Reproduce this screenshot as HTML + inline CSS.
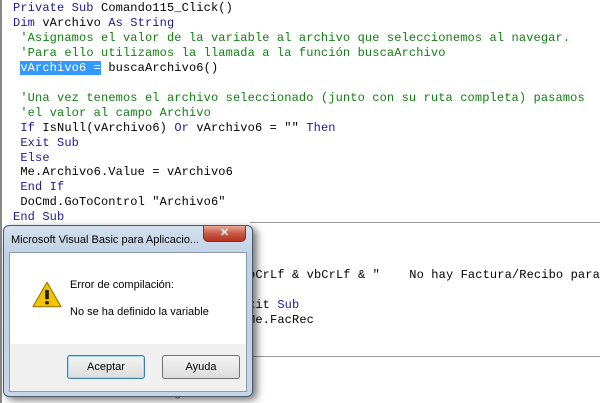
<!DOCTYPE html>
<html><head><style>
body{margin:0;width:600px;height:403px;overflow:hidden;background:#fff;position:relative;font-family:"Liberation Mono",monospace;}
.c{position:absolute;font-size:12px;white-space:pre;line-height:14.95px;color:#000;letter-spacing:0.13px}
.k{color:#1a1a9a}.g{color:#108010}
.hl{background:#3399ff;color:#fff}
.dlg{position:absolute;left:3px;top:225px;width:248px;height:170px;border:1px solid #4b5a6c;border-radius:6px;background:linear-gradient(#d3e0ee,#bfd1e4 30px,#c6d6e8);box-shadow:4px 3px 8px rgba(0,0,0,.55);font-family:"Liberation Sans",sans-serif;}
.tt{position:absolute;left:7px;top:8px;font-size:11px;color:#000;}
.x{position:absolute;left:199px;top:0px;width:41px;height:15px;border:1px solid #6d3530;border-top:none;border-radius:0 0 5px 5px;background:linear-gradient(#e9a89a,#c75a45 50%,#b7321e);color:#fff;font-weight:bold;font-size:11px;text-align:center;line-height:14px}
.in{position:absolute;left:5px;top:26px;width:236px;height:138px;border:1px solid #8c9aab;background:#f0f0f0}
.wh{position:absolute;left:0;top:0;width:236px;height:91px;background:#fff}
.b{position:absolute;top:102px;width:76px;height:22px;border:1px solid #707070;border-radius:3px;background:linear-gradient(#f4f4f4,#dcdcdc);font-size:11px;text-align:center;line-height:22px}
</style></head><body>
<div style="position:absolute;left:0;top:0;width:2px;height:403px;background:#888"></div>
<div style="position:absolute;left:250px;top:222px;width:350px;height:1px;background:#999"></div>
<div style="position:absolute;left:250px;top:356px;width:350px;height:1px;background:#999"></div>
<div class="c" style="left:13px;top:1px"><span class="k">Private Sub</span> Comando115_Click()
<span class="k">Dim</span> vArchivo <span class="k">As String</span>
 <span class="g">'Asignamos el valor de la variable al archivo que seleccionemos al navegar.</span>
 <span class="g">'Para ello utilizamos la llamada a la función buscaArchivo</span>
 <span class="hl">vArchivo6 =</span> buscaArchivo6()

 <span class="g">'Una vez tenemos el archivo seleccionado (junto con su ruta completa) pasamos</span>
 <span class="g">'el valor al campo Archivo</span>
 <span class="k">If</span> IsNull(vArchivo6) <span class="k">Or</span> vArchivo6 = "" <span class="k">Then</span>
 <span class="k">Exit Sub</span>
 <span class="k">Else</span>
 Me.Archivo6.Value = vArchivo6
 <span class="k">End If</span>
 DoCmd.GoToControl "Archivo6"
<span class="k">End Sub</span></div>
<div class="c" style="left:248px;top:268px">bCrLf &amp; vbCrLf &amp; "    No hay Factura/Recibo para</div>
<div class="c" style="left:248px;top:298px">xit <span class="k">Sub</span></div>
<div class="c" style="left:248px;top:313px">Me.FacRec</div>
<div class="c" style="left:20px;top:386px;color:#777"><span>Dim vArchivo As String</span></div>
<div class="dlg">
<div class="tt">Microsoft Visual Basic para Aplicacio...</div>
<div class="x">✕</div>
<div class="in"><div class="wh">
<svg style="position:absolute;left:22px;top:28px" width="30" height="27" viewBox="0 0 32 28"><path d="M16 1 L31 27 L1 27 Z" fill="#f5c400" stroke="#9a7a00" stroke-width="1.2" stroke-linejoin="round"/><rect x="14" y="9" width="4" height="10" rx="1" fill="#222"/><rect x="14" y="21" width="4" height="3.5" rx="1" fill="#222"/></svg>
<div style="position:absolute;left:60px;top:26px;font-size:11px">Error de compilación:</div>
<div style="position:absolute;left:60px;top:53px;font-size:11px">No se ha definido la variable</div>
</div>
<div class="b" style="left:57px;border-color:#3c7fb1;box-shadow:inset 0 0 0 1px #a6daf5">Aceptar</div>
<div class="b" style="left:152px">Ayuda</div>
</div>
</div>
</body></html>
